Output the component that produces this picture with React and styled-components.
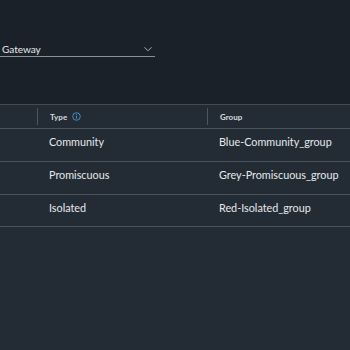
import React from 'react';
import styled, { createGlobalStyle } from 'styled-components';

const Global = createGlobalStyle`
  html, body { margin: 0; padding: 0; background: #1b2129; }
  body { font-family: Lato, "Open Sans", sans-serif; color: #e6e9ec; }
`;

const Page = styled.div`
  width: 350px;
  height: 350px;
  overflow: hidden;
  display: flex;
  flex-direction: column;
  background: #1b2129;
`;

const Top = styled.div`
  padding-top: 41px;
  height: 63px;
`;

const Select = styled.div`
  width: 155px;
  height: 16px;
  display: flex;
  align-items: center;
  justify-content: space-between;
  border-bottom: 1px solid #8a9096;
  font-size: 10px;
  color: #e8eaec;
  padding-left: 2px;
  box-sizing: border-box;
`;

const Chevron = styled.svg`
  width: 10px;
  height: 10px;
  margin-right: 2px;
`;

const Table = styled.div`
  flex: 1;
  background: #232c34;
  border-top: 1px solid #434b54;
`;

const Row = styled.div`
  display: grid;
  grid-template-columns: 37px 170px 1fr;
  height: ${p => p.$h}px;
  border-bottom: 1px solid #4a535c;
  box-sizing: border-box;
  align-items: ${p => (p.$head ? 'center' : 'start')};
`;

const HeadCell = styled.div`
  font-size: 8px;
  font-weight: 700;
  color: #d6dade;
  padding-left: 12px;
  height: 17px;
  display: flex;
  align-items: center;
  gap: 5px;
  border-left: ${p => (p.$first ? 'none' : '1px solid #4d555e')};
`;

const Cell = styled.div`
  font-size: 10.8px;
  color: #e6e9ec;
  padding-left: 12px;
  padding-top: 6px;
`;

const InfoIcon = () => (
  <svg width="9" height="9" viewBox="0 0 10 10">
    <circle cx="5" cy="5" r="4.2" fill="none" stroke="#4aa3df" strokeWidth="0.9" />
    <line x1="5" y1="4.3" x2="5" y2="7.3" stroke="#4aa3df" strokeWidth="1" />
    <circle cx="5" cy="2.9" r="0.6" fill="#4aa3df" />
  </svg>
);

const rows = [
  ['Community', 'Blue-Community_group', 33],
  ['Promiscuous', 'Grey-Promiscuous_group', 33],
  ['Isolated', 'Red-Isolated_group', 32],
];

export default function App() {
  return (
    <Page>
      <Global />
      <Top>
        <Select>
          Gateway
          <Chevron viewBox="0 0 10 10">
            <path d="M1.5 3.3 L5 6.8 L8.5 3.3" fill="none" stroke="#a9aeb3" strokeWidth="1" />
          </Chevron>
        </Select>
      </Top>
      <Table>
        <Row $head $h={24}>
          <HeadCell $first />
          <HeadCell>Type <InfoIcon /></HeadCell>
          <HeadCell>Group</HeadCell>
        </Row>
        {rows.map(([t, g, h]) => (
          <Row key={t} $h={h}>
            <Cell />
            <Cell>{t}</Cell>
            <Cell>{g}</Cell>
          </Row>
        ))}
      </Table>
    </Page>
  );
}
